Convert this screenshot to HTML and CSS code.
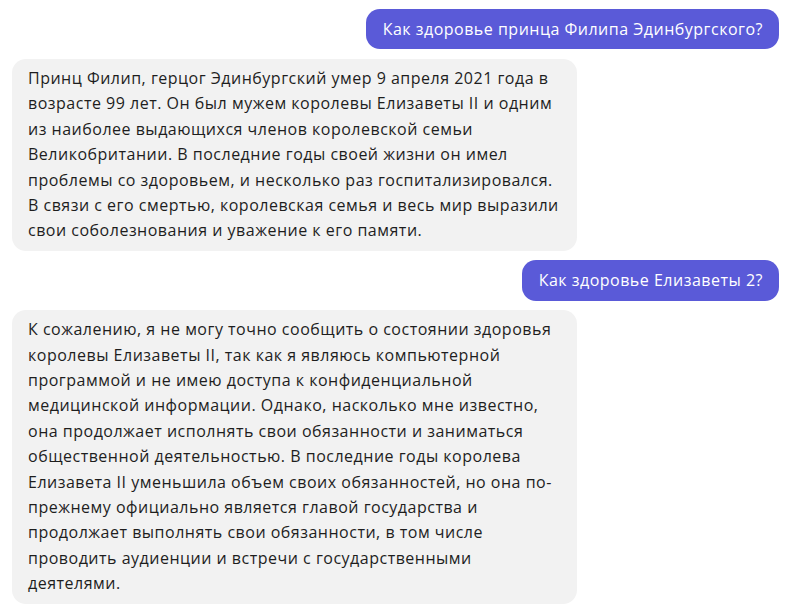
FILE: index.html
```html
<!DOCTYPE html>
<html lang="ru">
<head>
<meta charset="utf-8">
<title>Чат</title>
<link rel="stylesheet" href="styles.css">
</head>
<body>
<main class="chat">
  <div class="msg msg-user">Как здоровье принца Филипа Эдинбургского?</div>
  <div class="msg msg-bot">Принц Филип, герцог Эдинбургский умер 9 апреля 2021 года в<br>возрасте 99 лет. Он был мужем королевы Елизаветы II и одним<br>из наиболее выдающихся членов королевской семьи<br>Великобритании. В последние годы своей жизни он имел<br>проблемы со здоровьем, и несколько раз госпитализировался.<br>В связи с его смертью, королевская семья и весь мир выразили<br>свои соболезнования и уважение к его памяти.</div>
  <div class="msg msg-user">Как здоровье Елизаветы 2?</div>
  <div class="msg msg-bot">К сожалению, я не могу точно сообщить о состоянии здоровья<br>королевы Елизаветы II, так как я являюсь компьютерной<br>программой и не имею доступа к конфиденциальной<br>медицинской информации. Однако, насколько мне известно,<br>она продолжает исполнять свои обязанности и заниматься<br>общественной деятельностью. В последние годы королева<br>Елизавета II уменьшила объем своих обязанностей, но она по-<br>прежнему официально является главой государства и<br>продолжает выполнять свои обязанности, в том числе<br>проводить аудиенции и встречи с государственными<br>деятелями.</div>
</main>
</body>
</html>
```
FILE: styles.css
```css
html, body {
  margin: 0;
  padding: 0;
  background: #ffffff;
}
body {
  font-family: "Open Sans", "Noto Sans", sans-serif;
  font-size: 16px;
  letter-spacing: 0.5px;
  line-height: 25.4px;
  color: #1e1e1e;
}
.chat {
  display: flex;
  flex-direction: column;
  gap: 9.5px;
  padding: 9px 10px 0 12px;
}
.msg {
  border-radius: 14px;
  white-space: nowrap;
  box-sizing: border-box;
}
.msg-user {
  align-self: flex-end;
  background: #5a5ad8;
  color: #ffffff;
  padding: 7.5px 16px 7.5px 17px;
}
.msg-bot {
  align-self: flex-start;
  width: 565px;
  background: #f2f2f2;
  padding: 7px 16px;
}
```
